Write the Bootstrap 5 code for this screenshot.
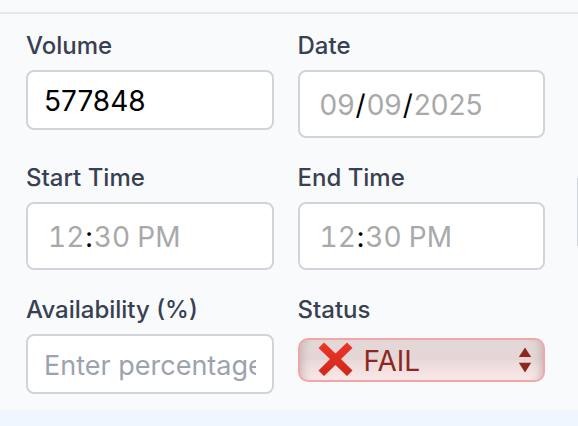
<!DOCTYPE html>
<html lang="en">
<head>
<meta charset="utf-8">
<meta name="viewport" content="width=device-width, initial-scale=1">
<title>Volume entry</title>
<link href="https://cdn.jsdelivr.net/npm/bootstrap@5.3.0/dist/css/bootstrap.min.css" rel="stylesheet">
<style>
  body { background: #f9fafb; font-family: Inter, "Liberation Sans", sans-serif; overflow-x: hidden; }
  .top-strip { height: 14px; border-bottom: 2px solid #e5e7eb; }
  .entry { padding: 16px 32px 16px 26px; }
  .field-grid { display: grid; grid-template-columns: repeat(2, minmax(0, 1fr)); gap: 24px; }
  .form-label { display: block; margin-bottom: 8px; font-size: 24px; line-height: 32px; font-weight: 500; color: #374151; }
  .form-control { height: 60px; padding: 2px 16px 0; border: 2px solid #d1d5db; border-radius: 8px; background: #fff; color: #000; font-size: 28px; line-height: 40px; }
  .form-control::placeholder { color: #9ca3af; font-size: 27px; }
  .picker { height: 68px; padding: 2px 19px 0; }
  .picker::-webkit-calendar-picker-indicator { display: none; }
  .picker::-webkit-datetime-edit { padding: 0; }
  .picker::-webkit-datetime-edit-text { color: #000; padding: 0; }
  .picker::-webkit-datetime-edit-month-field,
  .picker::-webkit-datetime-edit-day-field,
  .picker::-webkit-datetime-edit-year-field,
  .picker::-webkit-datetime-edit-hour-field,
  .picker::-webkit-datetime-edit-minute-field,
  .picker::-webkit-datetime-edit-ampm-field { color: #a9a9a9; padding: 0 1px; }
  .picker-time { font-variant-numeric: tabular-nums; }
  .status-select { appearance: none; display: block; width: 100%; height: 44px; padding: 2px 40px 0 64px; border: 2px solid #f3a6a6; border-radius: 10px; color: #8c2820; font-size: 28px; line-height: 38px;
    background: linear-gradient(#e3d7d7, #e5d6d6 50%, #e9d9d9 51%, #fbe8e8);
    box-shadow: inset 10px 0 8px -8px #a99c9c99, inset -10px 0 8px -8px #a99c9c99; }
  .status-box { margin-top: 12px; }
  .cross { left: 20px; top: 4px; pointer-events: none; }
  .arrows { right: 13px; top: 9px; pointer-events: none; }
  .next-panel { width: 1px; height: 68px; margin-top: 164px; background: #d1d5db; border-radius: 8px 0 0 8px; }
  .foot { border-top: 2px solid #f3f4f6; background: #eff6ff; }
</style>
</head>
<body class="d-flex flex-column min-vh-100">
<div class="top-strip"></div>
<main class="d-flex">
  <form class="entry flex-fill">
    <div class="field-grid">
      <div>
        <label class="form-label" for="volume">Volume</label>
        <input class="form-control" id="volume" type="text" value="577848">
      </div>
      <div>
        <label class="form-label" for="date">Date</label>
        <input class="form-control picker" id="date" type="date" value="2025-09-09">
      </div>
      <div>
        <label class="form-label" for="start">Start Time</label>
        <input class="form-control picker picker-time" id="start" type="time" value="12:30">
      </div>
      <div>
        <label class="form-label" for="end">End Time</label>
        <input class="form-control picker picker-time" id="end" type="time" value="12:30">
      </div>
      <div>
        <label class="form-label" for="availability">Availability (%)</label>
        <input class="form-control" id="availability" type="text" placeholder="Enter percentage">
      </div>
      <div>
        <label class="form-label" for="status">Status</label>
        <div class="status-box position-relative">
          <select class="status-select" id="status">
            <option selected>FAIL</option>
            <option>PASS</option>
          </select>
          <svg class="cross position-absolute" width="35" height="35" viewBox="0 0 35 35" aria-hidden="true">
            <defs><linearGradient id="red" x1="0" y1="0" x2="0" y2="1"><stop offset="0" stop-color="#ee3626"/><stop offset="1" stop-color="#cf261c"/></linearGradient></defs>
            <path fill="url(#red)" d="M6 .5 17.500 11.500 29 .5 34.500 6 23 17 34.500 28.500 29 34 17.500 23 6 34 .5 28.500 12 17 .5 6Z"/>
          </svg>
          <svg class="arrows position-absolute" width="14" height="26" viewBox="0 0 14 26" aria-hidden="true">
            <path fill="#8c2820" d="M7 .5 13.200 10H.8ZM.8 15.800h12.400L7 25.500Z"/>
          </svg>
        </div>
      </div>
    </div>
  </form>
  <div class="next-panel flex-shrink-0"></div>
</main>
<footer class="foot flex-fill"></footer>
<script src="https://cdn.jsdelivr.net/npm/bootstrap@5.3.0/dist/js/bootstrap.bundle.min.js"></script>
</body>
</html>
